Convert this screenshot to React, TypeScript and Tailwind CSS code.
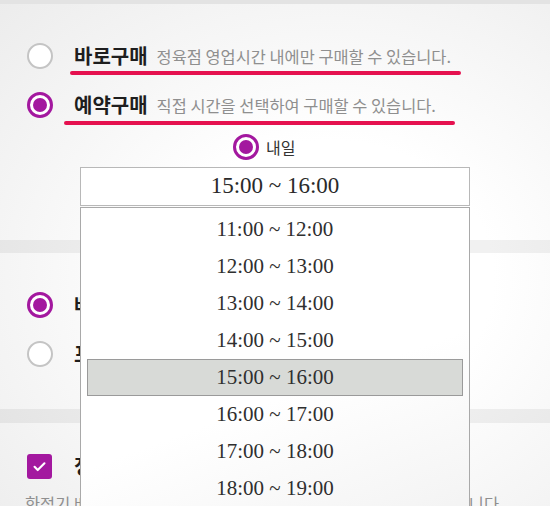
import React from "react";

const KR = "font-['Noto_Sans_CJK_KR','Noto_Sans',sans-serif]";
const SERIF = "font-['Liberation_Serif','DejaVu_Serif',serif]";

function Radio({ checked }: { checked?: boolean }) {
  if (checked) {
    return (
      <span className="flex h-[26px] w-[26px] shrink-0 items-center justify-center rounded-full border-[3px] border-[#a3189f] bg-white">
        <span className="h-[14px] w-[14px] rounded-full bg-[#a3189f]" />
      </span>
    );
  }
  return <span className="h-[26px] w-[26px] shrink-0 rounded-full border-2 border-[#c4c4c4] bg-white" />;
}

const slots = [
  "11:00 ~ 12:00",
  "12:00 ~ 13:00",
  "13:00 ~ 14:00",
  "14:00 ~ 15:00",
  "15:00 ~ 16:00",
  "16:00 ~ 17:00",
  "17:00 ~ 18:00",
  "18:00 ~ 19:00",
  "19:00 ~ 20:00",
];

export default function App() {
  return (
    <div
      className={`relative h-[506px] w-[550px] overflow-hidden bg-[radial-gradient(ellipse_at_60%_55%,#ffffff_35%,#ececec_100%)] ${KR}`}
    >
      <div className="h-[4px] bg-[#e3e3e3]" />

      {/* purchase type */}
      <div className="flex h-[236px] flex-col pt-[39px]">
        <div className="flex items-center pl-[27px]">
          <Radio />
          <span className="ml-[21px] text-[20px] font-bold leading-[26px] text-[#1e1e1e]">바로구매</span>
          <span className="ml-[9px] text-[16.4px] leading-[26px] text-[#8f8f8f]">정육점 영업시간 내에만 구매할 수 있습니다.</span>
        </div>
        <div className="ml-[70px] mt-[2px] h-[4px] w-[391px] rounded-full bg-[#e5114f]" />

        <div className="mt-[17px] flex items-center pl-[27px]">
          <Radio checked />
          <span className="ml-[21px] text-[20px] font-bold leading-[26px] text-[#1e1e1e]">예약구매</span>
          <span className="ml-[9px] text-[16.4px] leading-[26px] text-[#8f8f8f]">직접 시간을 선택하여 구매할 수 있습니다.</span>
        </div>
        <div className="ml-[64px] mt-[3px] h-[4px] w-[391px] rounded-full bg-[#e5114f]" />

        <div className="mt-[9px] flex items-center pl-[233px]">
          <Radio checked />
          <span className="ml-[7px] text-[16px] leading-[26px] text-[#333]">내일</span>
        </div>

        <div
          className={`ml-[80px] mt-[7px] flex h-[39px] w-[390px] items-center justify-center border border-[#b8b8b8] bg-white text-[23px] text-[#2a2a2a] ${SERIF}`}
        >
          15:00 ~ 16:00
        </div>
      </div>

      <div className="h-[13px] bg-black/[0.055]" />

      {/* receive type */}
      <div className="flex h-[156px] flex-col pt-[39px]">
        <div className="flex items-center pl-[27px]">
          <Radio checked />
          <span className="ml-[21px] text-[20px] font-bold leading-[26px] text-[#1e1e1e]">배달 주문</span>
        </div>
        <div className="mt-[23px] flex items-center pl-[27px]">
          <Radio />
          <span className="ml-[21px] text-[20px] font-bold leading-[26px] text-[#1e1e1e]">포장 주문</span>
        </div>
      </div>

      <div className="h-[14px] bg-black/[0.055]" />

      {/* agreement */}
      <div className="flex flex-col pt-[30px]">
        <div className="flex items-center pl-[27px]">
          <span className="flex h-[25px] w-[25px] items-center justify-center rounded-[3px] bg-[#a3189f]">
            <svg viewBox="0 0 24 24" className="h-[17px] w-[17px]" fill="none" stroke="#fff" strokeWidth="3" strokeLinecap="round" strokeLinejoin="round">
              <path d="M5 12.5l4.5 4.5L19 7.5" />
            </svg>
          </span>
          <span className="ml-[22px] text-[20px] font-bold leading-[26px] text-[#1e1e1e]">정기 구매 안내</span>
        </div>
        <div className="mt-[14px] whitespace-nowrap pl-[25px] text-[16.4px] leading-[20px] text-[#8f8f8f]">
          한정기 배송 상품은 결제 완료 후 순차적으로 배송 일정 안내를 드립니다
        </div>
      </div>

      {/* open time list */}
      <div
        className={`absolute left-[80px] top-[207px] w-[390px] border border-[#a9a9a9] bg-[linear-gradient(160deg,#ffffff_55%,#f1f1f1_100%)] px-[6px] pt-[3px] ${SERIF}`}
      >
        {slots.map((s) => (
          <div
            key={s}
            className={
              s === "15:00 ~ 16:00"
                ? "flex h-[37px] items-center justify-center border border-[#9a9a9a] bg-[#d8dad7] text-[21px] text-[#2f2f2f]"
                : "flex h-[37px] items-center justify-center text-[21px] text-[#2f2f2f]"
            }
          >
            {s}
          </div>
        ))}
      </div>
    </div>
  );
}
